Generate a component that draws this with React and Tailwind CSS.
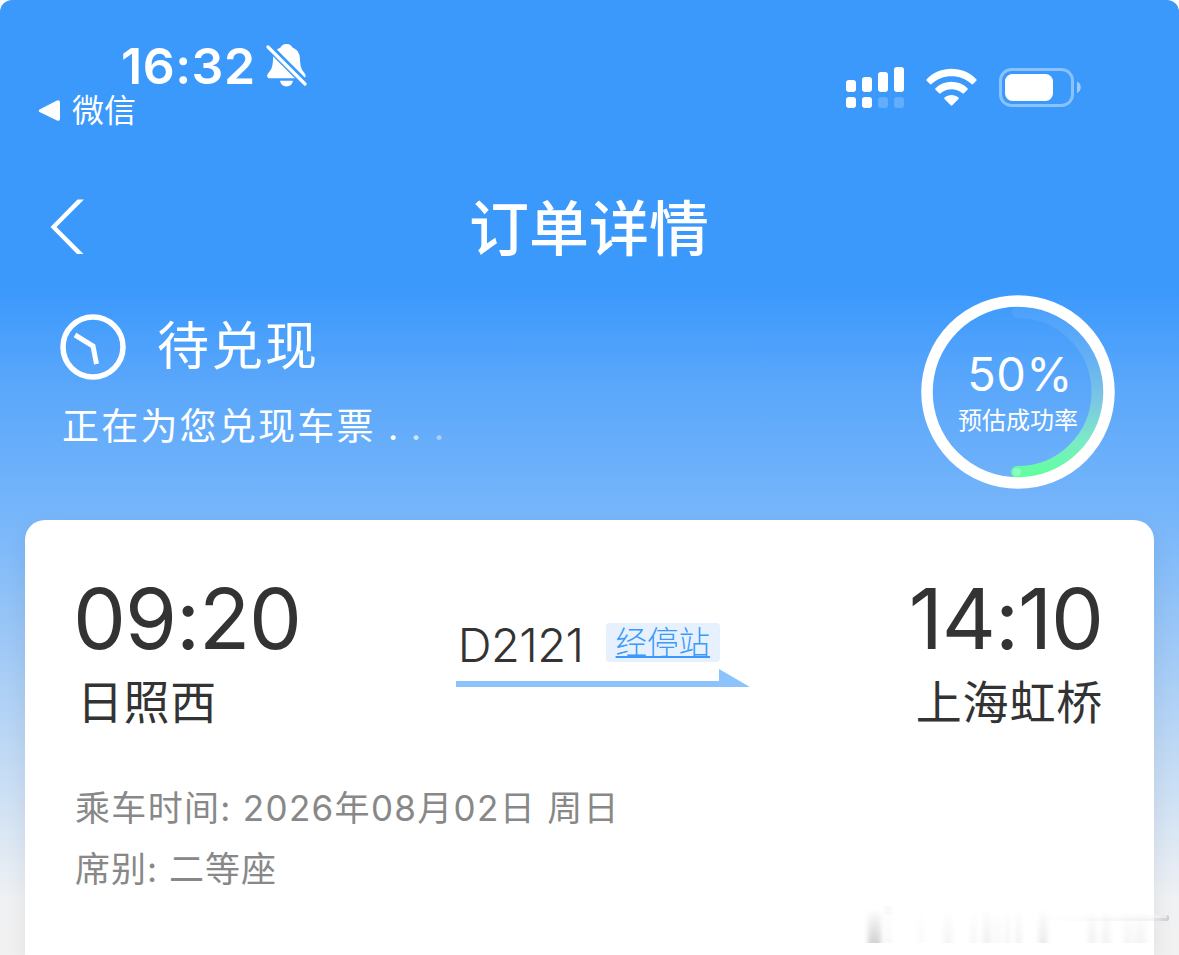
import React from "react";

// 訊號格：上排為主卡，下排為副卡
const signalBars = [
  { id: 1, height: 12, dim: false },
  { id: 2, height: 15, dim: false },
  { id: 3, height: 20, dim: true },
  { id: 4, height: 25, dim: true },
];

const loadingDots = [
  { id: 1, style: "opacity-100" },
  { id: 2, style: "opacity-70" },
  { id: 3, style: "opacity-45" },
];

// 車票的基本信息
const details = [
  { id: 1, text: "乘车时间: 2026年08月02日 周日", style: "tracking-[1.32px]" },
  { id: 2, text: "席别: 二等座", style: "tracking-[1px]" },
];

// 右下角淡化的水印條紋
const smudges = [
  { x: 4, w: 13, o: 0.26 },
  { x: 22, w: 5, o: 0.05 },
  { x: 54, w: 6, o: 0.03 },
  { x: 80, w: 8, o: 0.06 },
  { x: 107, w: 5, o: 0.06 },
  { x: 119, w: 8, o: 0.09 },
  { x: 131, w: 5, o: 0.06 },
  { x: 141, w: 5, o: 0.07 },
  { x: 152, w: 5, o: 0.09 },
  { x: 175, w: 8, o: 0.12 },
  { x: 224, w: 8, o: 0.08 },
  { x: 238, w: 8, o: 0.08 },
  { x: 260, w: 8, o: 0.06 },
  { x: 270, w: 12, o: 0.06 },
];

const MutedBell = () => (
  <svg width="42" height="46" viewBox="0 0 42 46" fill="none">
    <path
      d="M20.500 1C17 1 15 3 14.300 4.800C9.500 6.500 7.200 10.500 7 16C6.800 24 5.500 26.500 2.200 30.200C0.200 32.600 1.100 35.300 4.300 35.300H36.500C39.700 35.300 40.600 32.600 38.600 30.200C35.500 26.500 34.200 24 34 16C33.800 10.500 31.500 6.500 26.700 4.800C26 3 24 1 20.500 1Z"
      fill="white"
    />
    <path d="M14 37.800H27C26.300 41.500 24 43.500 20.500 43.500C17 43.500 14.700 41.500 14 37.800Z" fill="white" />
    <path d="M0 1L40 41" stroke="#3b99fc" strokeWidth="7.500" />
    <path d="M2 4L39 41" stroke="white" strokeWidth="3.200" strokeLinecap="round" />
  </svg>
);

const StatusBar = () => (
  <div className="flex h-[150px] justify-between">
    <div className="pt-[40px] pl-[38px]">
      <div className="flex h-[52px] items-center pl-[83px]">
        <span className="w-[145px] text-[50px] leading-[52px] font-semibold tracking-[0.5px] whitespace-nowrap">
          16:32
        </span>
        <MutedBell />
      </div>
      <div className="flex h-[38px] items-center">
        <svg width="22" height="22" viewBox="0 0 22 22">
          <path
            d="M1.500 9.500L19 0.500Q22 -0.500 22 2.500V18.500Q22 21.500 19 20.500L1.500 12Q0 11 1.500 9.500Z"
            fill="white"
          />
        </svg>
        <span className="ml-3 text-[32px] leading-[38px] font-normal">微信</span>
      </div>
    </div>

    <div className="flex items-start pt-[66px] pr-[97px]">
      <div className="flex gap-1.5">
        {signalBars.map((bar) => (
          <div key={bar.id} className="flex h-[42px] w-2.5 flex-col justify-end gap-[5px]">
            <div
              className="rounded-[3px] bg-white"
              style={{ height: `${bar.height}px` }}
            />
            <div
              className={`h-[11px] rounded-[3px] bg-white ${bar.dim ? "opacity-20" : ""}`}
            />
          </div>
        ))}
      </div>
      <svg className="ml-[22px]" width="51" height="42" viewBox="0 0 51 42" fill="white">
        <path d="M0.700 13.200C14 -0.700 37 -0.700 50.300 13.200Q51 14 50.300 14.800L47 18.100Q46.300 18.800 45.500 18.100C34.500 7.500 16.500 7.500 5.500 18.100Q4.700 18.800 4 18.100L0.700 14.800Q0 14 0.700 13.200Z" />
        <path d="M9.500 22.200C18.500 13.700 32.500 13.700 41.500 22.200Q42.200 23 41.500 23.800L37.900 27.300Q37.200 28 36.400 27.300C30 21.800 21 21.800 14.600 27.300Q13.800 28 13.100 27.300L9.500 23.800Q8.800 23 9.500 22.200Z" />
        <path d="M18.500 31.500C22.500 28 28.500 28 32.500 31.500Q33.300 32.200 32.500 33L26.300 39.300Q25.500 40 24.700 39.300L18.500 33Q17.700 32.200 18.500 31.500Z" />
      </svg>
      <svg className="ml-[22px]" width="83" height="42" viewBox="0 0 83 42" fill="none">
        <rect x="1.500" y="3.500" width="72" height="36" rx="11" stroke="white" strokeOpacity="0.400" strokeWidth="3" />
        <rect x="6" y="8" width="48" height="27" rx="7.500" fill="white" />
        <path d="M78 15.500C83 17.500 83 25 78 27Z" fill="white" fillOpacity="0.500" />
      </svg>
    </div>
  </div>
);

const NavBar = () => (
  <div className="grid h-[140px] grid-cols-[1fr_auto_1fr] items-start pt-[36px] pl-[50px]">
    <svg className="mt-[13px]" width="36" height="56" viewBox="0 0 36 56" fill="none">
      <path d="M27.500 0.500H34L6.500 28L33.500 55H27L0.500 28Z" fill="white" />
    </svg>
    <h1 className="-ml-[51px] pt-px text-[60px] leading-[84px] font-medium">订单详情</h1>
  </div>
);

const SuccessRing = () => (
  <div className="relative h-[196px] w-[196px]">
    <svg className="absolute inset-0" width="196" height="196" viewBox="0 0 196 196" fill="none">
      <defs>
        <linearGradient id="progress" x1="98" y1="15" x2="98" y2="180" gradientUnits="userSpaceOnUse">
          <stop offset="0" stopColor="#5aa8fa" stopOpacity="0.400" />
          <stop offset="0.300" stopColor="#65b0f3" />
          <stop offset="0.550" stopColor="#7cc6e4" />
          <stop offset="0.800" stopColor="#7bebc6" />
          <stop offset="1" stopColor="#62ffa0" />
        </linearGradient>
      </defs>
      <path d="M98 18A80 80 0 0 1 97 178" stroke="url(#progress)" strokeWidth="12" strokeLinecap="round" />
      <circle cx="97" cy="178" r="4" fill="#8cfcc0" />
      <circle cx="98" cy="98" r="91" stroke="white" strokeWidth="11.500" />
    </svg>
    <div className="relative flex flex-col items-center pt-[52px]">
      <span className="ml-1 text-[47px] leading-[56px] tracking-[0.3px]">50%</span>
      <span className="mt-[3px] text-[24px] leading-[32px]">预估成功率</span>
    </div>
  </div>
);

const OrderStatus = () => (
  <div className="flex h-[230px] justify-between pr-[63px] pl-[60px]">
    <div className="pt-[21px]">
      <div className="flex h-[72px] items-center">
        <svg width="66" height="66" viewBox="0 0 66 66" fill="none">
          <circle cx="33" cy="33" r="30" stroke="white" strokeWidth="5.500" />
          <path d="M15 21L33 32L36.500 50" stroke="white" strokeWidth="5" />
        </svg>
        <span className="-mt-[1px] ml-[31px] text-[52px] leading-[72px] font-normal tracking-[2px]">
          待兑现
        </span>
      </div>
      <div className="mt-[17px] flex h-[54px] items-center text-[37px] leading-[54px] font-normal">
        <span className="ml-[2px] tracking-[2.2px]">正在为您兑现车票</span>
        <span className="ml-[6px] flex">
          {loadingDots.map((dot) => (
            <span key={dot.id} className={`w-[23px] text-center ${dot.style}`}>
              .
            </span>
          ))}
        </span>
      </div>
    </div>
    <div className="pt-[4px]">
      <SuccessRing />
    </div>
  </div>
);

const TicketCard = () => (
  <div className="relative mx-[25px] h-[435px] rounded-t-[20px] bg-white text-[#333333] shadow-[0_8px_22px_rgba(0,0,0,0.07)]">
    <div className="flex h-[250px] justify-between pt-[50px] pr-[51px] pl-[50px]">
      <div>
        <p className="-ml-[2px] text-[84px] leading-[98px] tracking-[-1.1px]">09:20</p>
        <p className="ml-[2px] pt-px text-[46px] leading-[66px] font-normal tracking-[0.6px]">日照西</p>
      </div>
      <div className="-ml-[4px] pt-[50px]">
        <div className="flex h-[48px] items-center">
          <span className="w-[150px] pt-px pl-[2px] text-[47px] leading-[48px] font-light tracking-[-0.6px]">
            D2121
          </span>
          <span className="-mt-[3px] flex h-[39px] w-[114px] items-center justify-center rounded-[4px] bg-[#e6f1fd] text-[31.500px] leading-[39px] font-light text-[#3b99fc] underline decoration-2 underline-offset-[2px]">
            经停站
          </span>
        </div>
        <svg width="294" height="20" viewBox="0 0 294 20">
          <path d="M0 13H263V1L294 19H0Z" fill="#8dc3fc" />
        </svg>
      </div>
      <div className="text-right">
        <p className="text-[84px] leading-[98px] tracking-[-1.1px]">14:10</p>
        <p className="pt-px text-[46px] leading-[66px] font-normal tracking-[0.8px]">上海虹桥</p>
      </div>
    </div>

    <div className="pt-[8px] pl-[50px] text-[#888888]">
      {details.map((item) => (
        <p key={item.id} className={`text-[35px] leading-[61px] font-normal ${item.style}`}>
          {item.text}
        </p>
      ))}
    </div>

    <svg className="absolute top-[385px] left-[839px]" width="310" height="45" viewBox="0 0 310 45">
      <defs>
        <linearGradient id="fade" x1="0" y1="0" x2="0" y2="1">
          <stop offset="0" stopColor="#555" stopOpacity="0" />
          <stop offset="1" stopColor="#555" />
        </linearGradient>
        <linearGradient id="streak" x1="0" y1="0" x2="1" y2="0">
          <stop offset="0" stopColor="#777" stopOpacity="0" />
          <stop offset="0.900" stopColor="#777" stopOpacity="0.080" />
          <stop offset="1" stopColor="#777" stopOpacity="0.300" />
        </linearGradient>
        <filter id="soft" x="-50%" y="-10%" width="200%" height="120%">
          <feGaussianBlur stdDeviation="2.500 0.400" />
        </filter>
      </defs>
      {smudges.map((s) => (
        <rect key={s.x} x={s.x} y="4" width={s.w} height="34" fill="url(#fade)" opacity={s.o} filter="url(#soft)" />
      ))}
      <rect x="21" y="1" width="6" height="9" fill="#777" opacity="0.060" filter="url(#soft)" />
      <rect x="180" y="10" width="125" height="6" rx="2" fill="url(#streak)" />
      <rect x="190" y="10" width="113" height="3" fill="white" opacity="0.500" />
    </svg>
  </div>
);

const App = () => {
  return (
    <div className="h-[955px] w-[1179px] overflow-hidden bg-white">
      <div className="h-full w-full overflow-hidden rounded-t-[12px] bg-[linear-gradient(180deg,#3b99fc_0px,#3b99fc_290px,#5aa7fb_385px,#78b6fa_520px,#a0c9f6_650px,#cbdff4_790px,#f0f1f3_900px,#f1f1f1_955px)] font-[Inter,'Noto_Sans_CJK_SC',sans-serif] text-white">
        <StatusBar />
        <NavBar />
        <OrderStatus />
        <TicketCard />
      </div>
    </div>
  );
};

export default App;
